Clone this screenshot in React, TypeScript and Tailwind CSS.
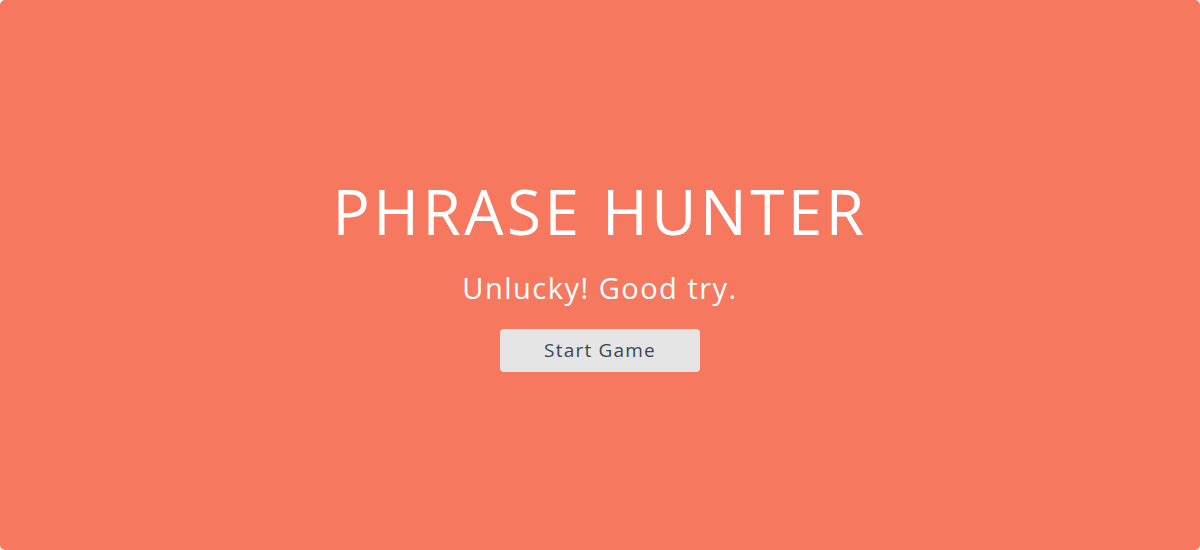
import React from 'react';

export default function App() {
  return (
    <div className="w-[1200px] h-[550px] bg-white">
      <div
        className="w-full h-full rounded-[5px] bg-[#f5785f] flex flex-col items-center justify-center"
        style={{ fontFamily: '"Open Sans", "Liberation Sans", sans-serif' }}
      >
        <h1 className="text-white text-[62px] leading-[62px] font-normal tracking-[3.5px] mt-[2px]">PHRASE HUNTER</h1>
        <p className="text-white text-[29px] leading-[36px] mt-[28px] tracking-[1.5px]">Unlucky! Good try.</p>
        <button className="mt-[23px] w-[200px] h-[43px] rounded-[4px] bg-[#e5e5e5] text-[#3a4550] text-[19px] tracking-[1.2px]">
          Start Game
        </button>
      </div>
    </div>
  );
}
